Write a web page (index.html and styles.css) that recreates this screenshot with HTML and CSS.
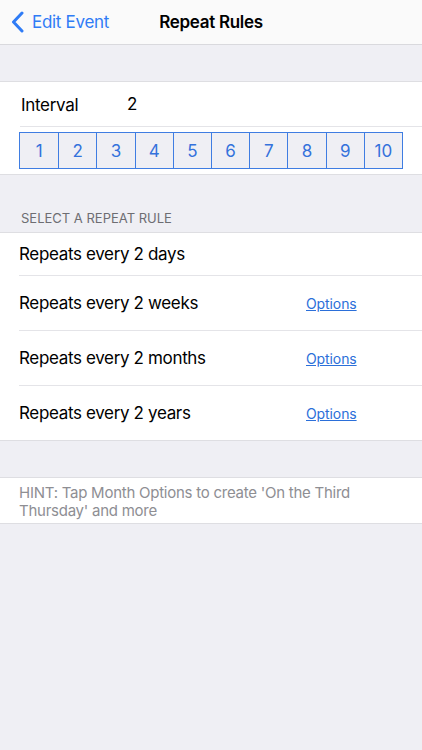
FILE: index.html
```html
<!DOCTYPE html>
<html>
<head>
<meta charset="utf-8">
<link rel="stylesheet" href="styles.css">
</head>
<body>
<div class="nav">
  <div class="back">
    <svg class="chev" width="13" height="22" viewBox="0 0 13 22"><path d="M11 2 L2.5 11 L11 20" fill="none" stroke="#2f7cf6" stroke-width="3" stroke-linecap="round" stroke-linejoin="round"/></svg>
    <span class="back-label">Edit Event</span>
  </div>
  <div class="title">Repeat Rules</div>
</div>
<div class="gap"></div>
<div class="section">
  <div class="interval-row">
    <span class="label">Interval</span>
    <span class="value">2</span>
  </div>
  <div class="buttons-wrap">
    <div class="buttons">
      <div class="btn">1</div><div class="btn">2</div><div class="btn">3</div><div class="btn">4</div><div class="btn">5</div><div class="btn">6</div><div class="btn">7</div><div class="btn">8</div><div class="btn">9</div><div class="btn">10</div>
    </div>
  </div>
</div>
<div class="header">SELECT A REPEAT RULE</div>
<div class="section">
  <div class="row first"><span>Repeats every 2 days</span></div>
  <div class="row"><span>Repeats every 2 weeks</span><a class="opt">Options</a></div>
  <div class="row"><span>Repeats every 2 months</span><a class="opt">Options</a></div>
  <div class="row last"><span>Repeats every 2 years</span><a class="opt">Options</a></div>
</div>
<div class="gap"></div>
<div class="section hint">HINT: Tap Month Options to create 'On the Third Thursday' and more</div>
</body>
</html>
```
FILE: styles.css
```css
html, body { margin: 0; padding: 0; }
body {
  background: #efeff4;
  font-family: Inter, "Liberation Sans", sans-serif;
  color: #000;
  width: 422px;
  height: 750px;
}
.nav {
  height: 44px;
  background: #fafafa;
  border-bottom: 1px solid #d9d9dd;
  position: relative;
  display: flex;
  align-items: center;
  justify-content: center;
}
.back {
  position: absolute;
  left: 11px;
  top: 11px;
  display: flex;
  align-items: center;
  gap: 8px;
}
.back-label { color: #2f7cf6; font-size: 17px; letter-spacing: -0.3px; }
.title { font-size: 17px; font-weight: 600; letter-spacing: -0.3px; }
.gap { height: 36px; }
.section {
  background: #fff;
  border-top: 1px solid #dedee2;
  border-bottom: 1px solid #dedee2;
}
.interval-row {
  height: 44px;
  margin-left: 20px;
  border-bottom: 1px solid #e4e4e8;
  display: flex;
  align-items: center;
  font-size: 17px;
  letter-spacing: -0.3px;
}
.interval-row .label { width: 106px; padding-left: 1px; padding-top: 2px; }
.buttons-wrap { padding: 5px 0 5px 19px; }
.buttons {
  width: 384px;
  display: grid;
  grid-template-columns: repeat(10, 1fr);
  border: 1px solid #3f7de2;
  box-sizing: border-box;
  background: #efeff4;
}
.btn {
  height: 35px;
  display: flex;
  align-items: center;
  justify-content: center;
  color: #3472dc;
  font-size: 17px;
  border-left: 1px solid #3f7de2;
}
.btn:first-child { border-left: none; }
.header {
  height: 57px;
  box-sizing: border-box;
  padding: 35px 0 0 21px;
  font-size: 13px;
  color: #6d6d72;
  letter-spacing: 0;
}
.row {
  height: 55px;
  margin-left: 19px;
  border-bottom: 1px solid #e4e4e8;
  display: flex;
  align-items: center;
  font-size: 17px;
  letter-spacing: -0.35px;
  box-sizing: border-box;
}
.row.first { height: 43px; }
.row.last { border-bottom: none; height: 54px; }
.row span { width: 287px; }
.opt {
  color: #2b6fd9;
  text-decoration: underline;
  font-size: 14px;
  letter-spacing: -0.1px;
}
.hint {
  height: 47px;
  box-sizing: border-box;
  padding: 6px 19px 0 19px;
  font-size: 15px;
  line-height: 18px;
  color: #8e8e93;
  letter-spacing: -0.25px;
}
```
